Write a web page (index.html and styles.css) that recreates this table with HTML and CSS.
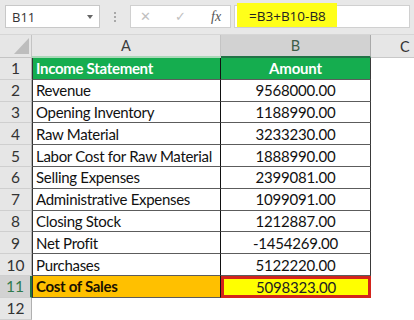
FILE: index.html
```html
<!DOCTYPE html>
<html>
<head>
<meta charset="utf-8">
<link rel="stylesheet" href="styles.css">
</head>
<body>
<div class="app">
  <div class="toolbar">
    <div class="namebox"><span class="ref">B11</span><span class="caret"></span></div>
    <div class="dots"><i></i><i></i><i></i></div>
    <div class="fbuttons">
      <span class="fbtn x">✕</span>
      <span class="fbtn ok">✓</span>
      <span class="fx">fx</span>
    </div>
    <div class="finput"><span class="formula">=B3+B10-B8</span></div>
  </div>
  <div class="sheet">
    <div class="corner"><span class="tri"></span></div>
    <div class="colh ca">A</div>
    <div class="colh cb">B</div>
    <div class="colh cc">C</div>

    <div class="rowh">1</div><div class="cell a head">Income Statement</div><div class="cell b head">Amount</div><div class="empty"></div>
    <div class="rowh">2</div><div class="cell a">Revenue</div><div class="cell b">9568000.00</div><div class="empty"></div>
    <div class="rowh">3</div><div class="cell a">Opening Inventory</div><div class="cell b">1188990.00</div><div class="empty"></div>
    <div class="rowh">4</div><div class="cell a">Raw Material</div><div class="cell b">3233230.00</div><div class="empty"></div>
    <div class="rowh">5</div><div class="cell a">Labor Cost for Raw Material</div><div class="cell b">1888990.00</div><div class="empty"></div>
    <div class="rowh">6</div><div class="cell a">Selling Expenses</div><div class="cell b">2399081.00</div><div class="empty"></div>
    <div class="rowh">7</div><div class="cell a">Administrative Expenses</div><div class="cell b">1099091.00</div><div class="empty"></div>
    <div class="rowh">8</div><div class="cell a">Closing Stock</div><div class="cell b">1212887.00</div><div class="empty"></div>
    <div class="rowh">9</div><div class="cell a">Net Profit</div><div class="cell b">-1454269.00</div><div class="empty"></div>
    <div class="rowh">10</div><div class="cell a">Purchases</div><div class="cell b">5122220.00</div><div class="empty"></div>
    <div class="rowh sel">11</div><div class="cell a total">Cost of Sales</div><div class="cell b result">5098323.00</div><div class="empty"></div>
    <div class="rowh">12</div><div class="empty"></div><div class="empty"></div><div class="empty"></div>
  </div>
</div>
</body>
</html>
```

FILE: styles.css
```css
* { box-sizing: border-box; }
html, body { margin: 0; padding: 0; }
body {
  width: 414px;
  height: 320px;
  overflow: hidden;
  background: #fff;
  font-family: Lato, "Open Sans", sans-serif;
}
.app { width: 414px; height: 320px; overflow: hidden; }

.toolbar {
  height: 35px;
  background: #e8e8e8;
  display: flex;
  align-items: flex-start;
  padding-top: 5px;
  padding-left: 5px;
  border-bottom: 1px solid #d6d6d6;
}
.namebox {
  width: 95px;
  height: 23px;
  background: #fff;
  border: 1px solid #c8c8c8;
  display: flex;
  align-items: center;
  justify-content: space-between;
  padding: 0 6px 0 6px;
}
.ref { font-family: "Open Sans", sans-serif; font-size: 13px; color: #333; }
.caret {
  width: 0; height: 0;
  border-left: 3px solid transparent;
  border-right: 3px solid transparent;
  border-top: 4px solid #666;
}
.dots {
  width: 30px;
  height: 23px;
  display: flex;
  flex-direction: column;
  align-items: center;
  justify-content: center;
  gap: 2px;
}
.dots i { display: block; width: 2px; height: 2px; background: #a8a8a8; }
.fbuttons {
  width: 101px;
  height: 23px;
  background: #fff;
  border: 1px solid #d0d0d0;
  display: flex;
  align-items: center;
  padding-left: 9px;
}
.fbtn { color: #c0c0c0; font-family: "DejaVu Sans", sans-serif; font-size: 13px; }
.fbtn.x { width: 35px; }
.fbtn.ok { width: 36px; }
.fx {
  font-family: "Liberation Serif", serif;
  font-style: italic;
  font-size: 14px;
  color: #555;
}
.finput {
  margin-left: 3px;
  width: 176px;
  height: 23px;
  background: #fff;
  border: 1px solid #d0d0d0;
  display: flex;
  align-items: stretch;
}
.formula {
  margin-top: -3px;
  margin-left: 2px;
  width: 100px;
  background: #ffff1a;
  font-family: "Open Sans", sans-serif;
  font-size: 13.5px;
  color: #222;
  display: flex;
  align-items: center;
  padding-left: 12px;
  padding-top: 2px;
}

.sheet {
  display: grid;
  grid-template-columns: 32px 189px 150px 43px;
  grid-template-rows: 23px repeat(12, 21.8px);
}
.corner {
  background: #e6e6e6;
  border-right: 1px solid #c4c4c4;
  border-bottom: 1px solid #c4c4c4;
  position: relative;
}
.tri {
  position: absolute;
  right: 2px;
  bottom: 3px;
  width: 0; height: 0;
  border-left: 15px solid transparent;
  border-bottom: 16px solid #bdbdbd;
}
.colh {
  background: #e6e6e6;
  display: flex;
  align-items: center;
  justify-content: center;
  font-size: 14.5px;
  color: #3c3c3c;
  border-right: 1px solid #c4c4c4;
}
.ca { border-bottom: 2px solid #a9d8b8; }
.cb { background: #d2d2d2; border-bottom: 2px solid #217346; color: #3d5e48; border-right-color: #aaa; }
.cc { border-right: none; border-bottom: 1px solid #c8c8c8; justify-content: flex-start; padding-left: 29px; color: #333; }

.rowh {
  background: #e6e6e6;
  border-right: 1px solid #b0b0b0;
  border-bottom: 1px solid #cfcfcf;
  display: flex;
  align-items: center;
  justify-content: center;
  font-size: 15.5px;
  color: #333;
}
.rowh.sel { background: #d2d2d2; color: #2f7a4c; border-right: 2px solid #217346; }

.cell {
  display: flex;
  align-items: center;
  font-size: 15px;
  letter-spacing: -0.2px;
  color: #111;
  border-bottom: 1px solid #5c5c5c;
  white-space: nowrap;
}
.cell.a {
  border-left: 1px solid #333;
  border-right: 1px solid #111;
  padding-left: 3px;
  letter-spacing: -0.3px;
}
.cell.b {
  justify-content: center;
  border-right: 1px solid #3a3a3a;
}
.cell.head {
  background: #15ad4f;
  color: #fff;
  font-weight: bold;
}
.cell.total {
  background: #ffc000;
  font-weight: bold;
  color: #1a1200;
}
.cell.result {
  background: #ffff00;
  border: 3px solid #d3241c;
  color: #222;
}
.empty { background: #fff; }
```
